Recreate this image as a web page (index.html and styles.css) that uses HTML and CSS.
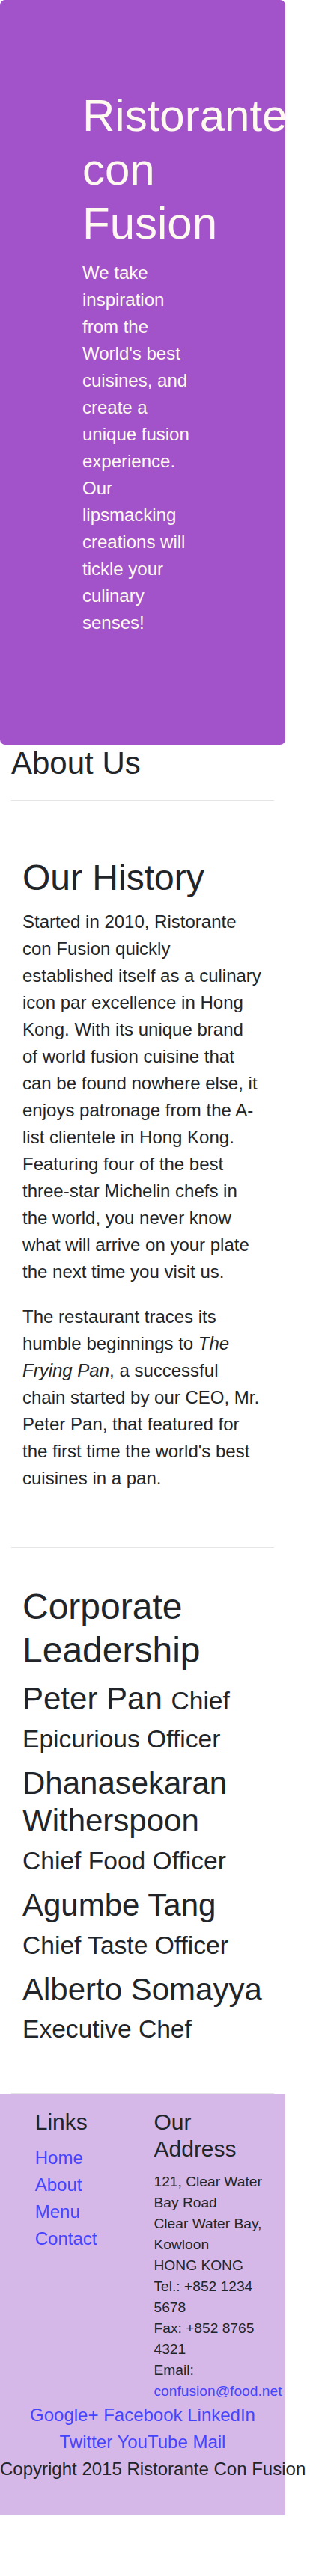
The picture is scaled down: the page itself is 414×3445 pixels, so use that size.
FILE: index.html
```html
<!DOCTYPE html>
<html lang="en">
<head>
<meta charset="utf-8">
<title>Ristorante con Fusion: About Us</title>
<link rel="stylesheet" href="styles.css">
</head>
<body>
<div class="page">
  <header class="jumbotron">
    <div class="hero-col">
      <h1 class="hero-title">Ristorante con Fusion</h1>
      <p class="hero-text">We take inspiration from the World's best cuisines, and create a unique fusion experience. Our lipsmacking creations will tickle your culinary senses!</p>
    </div>
  </header>

  <main class="container">
    <div class="intro">
      <h3 class="intro-title">About Us</h3>
      <hr class="rule">
    </div>

    <section class="row-content">
      <div class="col">
        <h2 class="section-title">Our History</h2>
        <p class="body-text">Started in 2010, Ristorante con Fusion quickly established itself as a culinary icon par excellence in Hong Kong. With its unique brand of world fusion cuisine that can be found nowhere else, it enjoys patronage from the A-list clientele in Hong Kong. Featuring four of the best three-star Michelin chefs in the world, you never know what will arrive on your plate the next time you visit us.</p>
        <p class="body-text">The restaurant traces its humble beginnings to <em>The Frying Pan</em>, a successful chain started by our CEO, Mr. Peter Pan, that featured for the first time the world's best cuisines in a pan.</p>
      </div>
    </section>

    <section class="row-content">
      <div class="col">
        <h2 class="section-title">Corporate Leadership</h2>
        <h3 class="leader">Peter Pan <small class="role">Chief Epicurious Officer</small></h3>
        <h3 class="leader">Dhanasekaran Witherspoon <small class="role">Chief Food Officer</small></h3>
        <h3 class="leader">Agumbe Tang <small class="role">Chief Taste Officer</small></h3>
        <h3 class="leader">Alberto Somayya <small class="role">Executive Chef</small></h3>
      </div>
    </section>
  </main>

  <footer class="footer">
    <div class="footer-cols">
      <div class="links-col">
        <h5 class="footer-title">Links</h5>
        <ul class="link-list">
          <li><a class="link" href="#">Home</a></li>
          <li><a class="link" href="#">About</a></li>
          <li><a class="link" href="#">Menu</a></li>
          <li><a class="link" href="#">Contact</a></li>
        </ul>
      </div>
      <div class="address-col">
        <h5 class="footer-title">Our Address</h5>
        <address class="address">121, Clear Water Bay Road<br>Clear Water Bay, Kowloon<br>HONG KONG<br>Tel.: +852 1234 5678<br>Fax: +852 8765 4321<br>Email: <a class="link" href="mailto:confusion@food.net">confusion@food.net</a></address>
      </div>
    </div>
    <div class="social">
      <a class="link" href="#">Google+</a>
      <a class="link" href="#">Facebook</a>
      <a class="link" href="#">LinkedIn</a>
      <a class="link" href="#">Twitter</a>
      <a class="link" href="#">YouTube</a>
      <a class="link" href="#">Mail</a>
    </div>
    <p class="copyright">Copyright 2015 Ristorante Con Fusion</p>
  </footer>
</div>
</body>
</html>
```

FILE: styles.css
```css
*, *::before, *::after {
  box-sizing: border-box;
}

html, body {
  margin: 0;
  padding: 0;
  background: #ffffff;
}

body {
  font-family: "Liberation Sans", Arial, sans-serif;
  font-size: 24px;
  line-height: 1.5;
  color: #212529;
}

.page {
  width: 381px;
}

/* Jumbotron */
.jumbotron {
  background: #a253c9;
  border-radius: 7px;
  padding: 119px 0 121px 110px;
  color: #fffaf0;
}

.hero-col {
  width: 155px;
}

.hero-title {
  margin: 0 0 12px;
  font-size: 60px;
  line-height: 1.2;
  font-weight: 400;
}

.hero-text {
  margin: 0 0 24px;
  font-size: 24px;
  line-height: 36px;
}

/* Main content */
.container {
  padding: 0 15px;
}

.intro-title {
  margin: 0 0 12px;
  font-size: 42px;
  line-height: 1.2;
  font-weight: 400;
}

.rule {
  margin: 24px 0;
  border: 0;
  border-top: 1px solid rgba(0, 0, 0, 0.1);
  height: 0;
}

.row-content {
  padding: 50px 0;
  border-bottom: 1px solid #e6e6e6;
}

.col {
  padding: 0 15px;
}

.section-title {
  margin: 0 0 12px;
  font-size: 48px;
  line-height: 1.2;
  font-weight: 400;
}

.body-text {
  margin: 0 0 24px;
}

.leader {
  margin: 0 0 12px;
  font-size: 42px;
  line-height: 1.2;
  font-weight: 400;
}

.role {
  font-size: 80%;
  font-weight: 400;
}

/* Footer */
.footer {
  background: #d6b8e8;
  padding: 20px 0;
}

.footer-cols {
  display: flex;
  align-items: flex-start;
}

.links-col {
  margin-left: 31.75px;
  width: 158.75px;
  padding: 0 15px;
}

.address-col {
  width: 190.5px;
  padding: 0 15px;
}

.footer-title {
  margin: 0 0 12px;
  font-size: 30px;
  line-height: 1.2;
  font-weight: 400;
}

.link-list {
  list-style: none;
  margin: 0;
  padding: 0;
}

.link {
  color: #4444ff;
  text-decoration: none;
}

.address {
  margin: 0;
  font-style: normal;
  font-size: 19.2px;
  line-height: 28px;
}

.social {
  margin: 0 15px;
  text-align: center;
  line-height: 36px;
}

.copyright {
  margin: 0 0 24px;
  text-align: center;
  white-space: nowrap;
  line-height: 36px;
}
```
